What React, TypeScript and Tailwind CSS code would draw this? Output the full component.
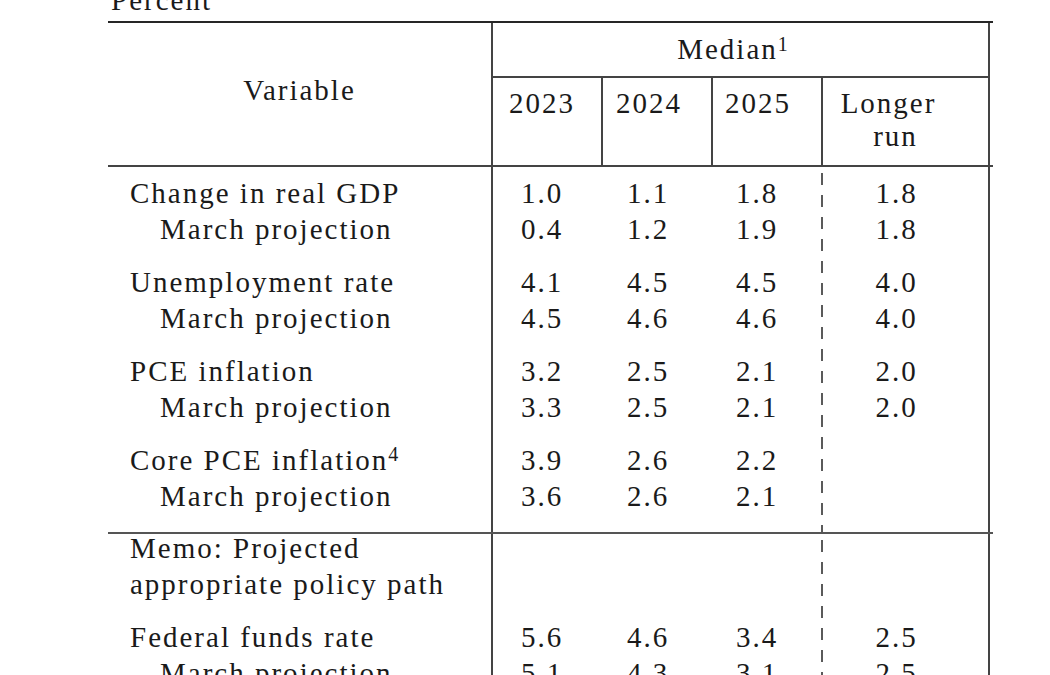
type Line = { label: React.ReactNode; indent?: boolean; vals: string[] };

const sectionA: Line[][] = [
  [
    { label: "Change in real GDP", vals: ["1.0", "1.1", "1.8", "1.8"] },
    { label: "March projection", indent: true, vals: ["0.4", "1.2", "1.9", "1.8"] },
  ],
  [
    { label: "Unemployment rate", vals: ["4.1", "4.5", "4.5", "4.0"] },
    { label: "March projection", indent: true, vals: ["4.5", "4.6", "4.6", "4.0"] },
  ],
  [
    { label: "PCE inflation", vals: ["3.2", "2.5", "2.1", "2.0"] },
    { label: "March projection", indent: true, vals: ["3.3", "2.5", "2.1", "2.0"] },
  ],
  [
    {
      label: (
        <>
          Core PCE inflation<span className="text-[20px] leading-none align-[9px]">4</span>
        </>
      ),
      vals: ["3.9", "2.6", "2.2", ""],
    },
    { label: "March projection", indent: true, vals: ["3.6", "2.6", "2.1", ""] },
  ],
];

const sectionB: Line[][] = [
  [
    { label: "Memo: Projected", vals: ["", "", "", ""] },
    { label: "appropriate policy path", vals: ["", "", "", ""] },
  ],
  [
    { label: "Federal funds rate", vals: ["5.6", "4.6", "3.4", "2.5"] },
    { label: "March projection", indent: true, vals: ["5.1", "4.3", "3.1", "2.5"] },
  ],
];

// per-column width + centering offset
const cols = [
  "w-[108px] pr-[10px]",
  "w-[110px] pr-[16px]",
  "w-[110px] pr-[18px]",
  "flex-1 pr-[16px] bg-[linear-gradient(#5a5a5a_0_12px,transparent_12px)] bg-[length:2px_22px] bg-repeat-y bg-[position:0_6px]",
];

function Groups({ groups, idx, first }: { groups: Line[][]; idx: number; first?: string }) {
  return (
    <>
      {groups.map((g, gi) => (
        <div key={gi} className={gi > 0 ? "mt-[17px]" : first}>
          {g.map((line, li) => (
            <div key={li} className="h-[36px] leading-[36px]">
              {line.vals[idx]}
            </div>
          ))}
        </div>
      ))}
    </>
  );
}

function Labels({ groups, first, pad }: { groups: Line[][]; first?: string; pad: string }) {
  return (
    <div className={`w-[383px] ${pad}`}>
      {groups.map((g, gi) => (
        <div key={gi} className={gi > 0 ? "mt-[17px]" : first}>
          {g.map((line, li) => (
            <div
              key={li}
              className={`h-[36px] leading-[36px] whitespace-nowrap ${line.indent ? "pl-[52px]" : "pl-[22px]"}`}
            >
              {line.label}
            </div>
          ))}
        </div>
      ))}
    </div>
  );
}

function Section({
  groups,
  className,
  pad,
  first,
}: {
  groups: Line[][];
  className: string;
  pad: string;
  first?: string;
}) {
  return (
    <div className={`flex ${className}`}>
      <Labels groups={groups} first={first} pad={pad} />
      <div className="flex w-[499px] border-x-2 border-[#444]">
        {cols.map((c, i) => (
          <div key={i} className={`${c} ${pad} text-center`}>
            <Groups groups={groups} idx={i} first={first} />
          </div>
        ))}
      </div>
    </div>
  );
}

export default function App() {
  return (
    <div className="flex h-[675px] w-[1050px] flex-col overflow-hidden bg-white font-['Liberation_Serif','Times_New_Roman',serif] text-[29px] tracking-[2px] text-[#1a1a1a]">
      <div className="-mt-[18px] h-[36px] pl-[111px] leading-[36px]">Percent</div>

      <div className="mt-[3px] ml-[108px] w-[885px] border-t-2 border-[#262626]">
        {/* header */}
        <div className="flex border-b-2 border-[#444]">
          <div className="h-[142px] w-[383px] pt-[49px] text-center leading-[36px]">Variable</div>
          <div className="flex w-[499px] flex-col border-x-2 border-[#444]">
            <div className="h-[55px] border-b-2 border-[#444] pt-[8px] pr-[14px] text-center leading-[36px]">
              Median<span className="text-[20px] leading-none align-[8px]">1</span>
            </div>
            <div className="flex h-[87px] text-center leading-[36px]">
              <div className="w-[108px] pt-[7px] pr-[10px]">2023</div>
              <div className="w-[110px] border-l-2 border-[#444] pt-[7px] pr-[16px]">2024</div>
              <div className="w-[110px] border-l-2 border-[#444] pt-[7px] pr-[18px]">2025</div>
              <div className="flex-1 border-l-2 border-[#444] pt-[9px] leading-[33px]">
                <div className="pr-[34px]">Longer</div>
                <div className="pr-[20px]">run</div>
              </div>
            </div>
          </div>
        </div>

        {/* projections */}
        <Section groups={sectionA} className="border-b-2 border-[#555]" pad="pt-[8px] pb-[18px]" />

        {/* memo */}
        <Section groups={sectionB} className="" pad="pb-[40px]" first="-mt-[4px]" />
      </div>
    </div>
  );
}
